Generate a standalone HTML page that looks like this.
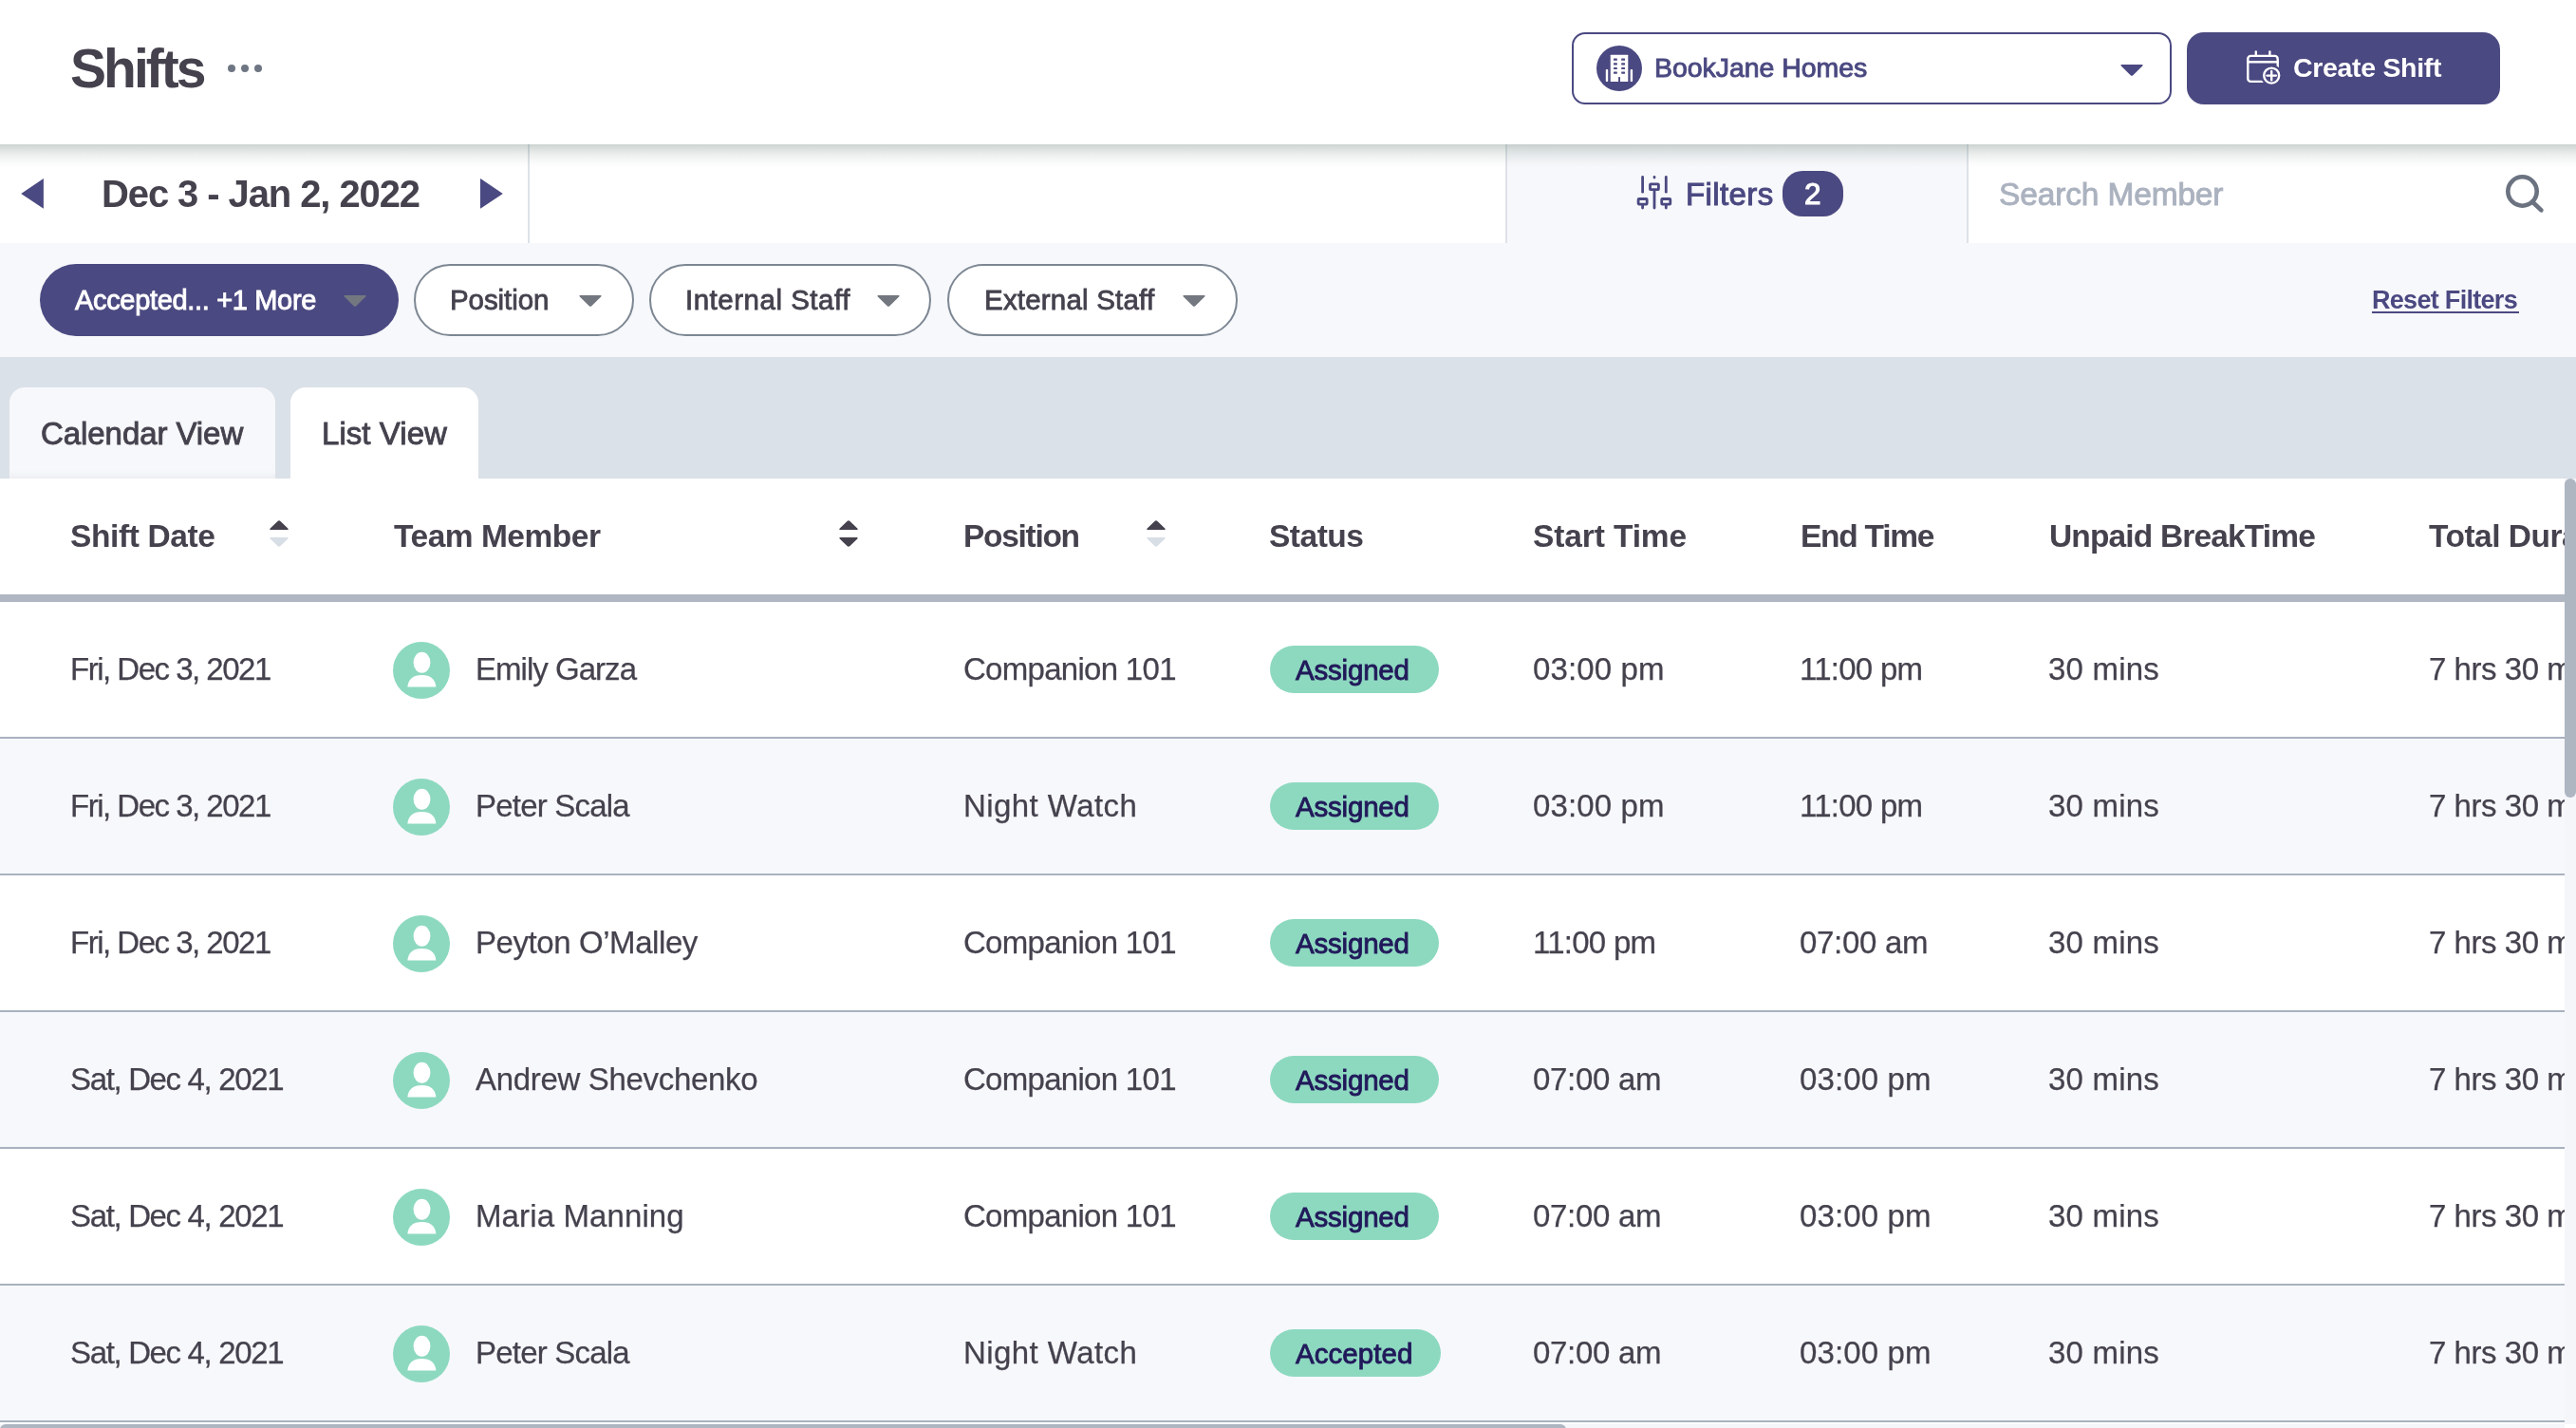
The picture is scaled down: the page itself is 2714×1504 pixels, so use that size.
<!DOCTYPE html>
<html><head><meta charset="utf-8"><title>Shifts</title>
<style>
html,body{margin:0;padding:0;}
body{width:2714px;height:1504px;position:relative;overflow:hidden;background:#fff;font-family:"Liberation Sans",sans-serif;}
.a{position:absolute;}
.t{position:absolute;white-space:nowrap;will-change:transform;}
svg.a{display:block;}
</style></head><body>
<div class="a" style="left:0px;top:0px;width:2714px;height:152px;background:#fff;"></div>
<div class="t " style="left:74.4px;top:43.95px;font-size:57px;line-height:57px;font-weight:700;color:#45424e;letter-spacing:-2.98px;">Shifts</div>
<div class="a" style="left:240px;top:68px;width:8px;height:8px;background:#6f7683;border-radius:50%;"></div>
<div class="a" style="left:254px;top:68px;width:8px;height:8px;background:#6f7683;border-radius:50%;"></div>
<div class="a" style="left:268px;top:68px;width:8px;height:8px;background:#6f7683;border-radius:50%;"></div>
<div class="a" style="left:1656px;top:34px;width:632px;height:76px;box-sizing:border-box;border:2px solid #4b4981;border-radius:14px;background:#fff;"></div>
<div class="a" style="left:1682px;top:48px;width:48px;height:48px;background:#4b4981;border-radius:50%;"></div>
<svg class="a" style="left:1682px;top:48px" width="48" height="48" viewBox="0 0 48 48">
<rect x="14.75" y="9.8" width="18.55" height="28.2" rx="0.5" fill="#fff"/>
<rect x="23.1" y="33.1" width="1.9" height="5" fill="#4b4981"/>
<g fill="#4b4981">
<rect x="18" y="13.5" width="3.85" height="2.3" rx="0.4"/><rect x="26.2" y="13.5" width="3.85" height="2.3" rx="0.4"/>
<rect x="18" y="18.2" width="3.85" height="2.2" rx="0.4"/><rect x="26.2" y="18.2" width="3.85" height="2.2" rx="0.4"/>
<rect x="18" y="22.9" width="3.85" height="2.0" rx="0.4"/><rect x="26.2" y="22.9" width="3.85" height="2.0" rx="0.4"/>
<rect x="18" y="27.5" width="3.85" height="2.2" rx="0.4"/><rect x="26.2" y="27.5" width="3.85" height="2.2" rx="0.4"/>
</g>
<rect x="9.8" y="24.9" width="2.4" height="13.1" rx="0.8" fill="#fff"/>
<rect x="35.7" y="24.9" width="2.4" height="13.1" rx="0.8" fill="#fff"/>
</svg>
<div class="t " style="left:1742.6px;top:57.37px;font-size:28.5px;line-height:28.5px;color:#4b4981;letter-spacing:-0.054px;-webkit-text-stroke:0.9px #4b4981;">BookJane Homes</div>
<svg class="a" style="left:2232px;top:66px" width="28" height="16" viewBox="0 0 28 16"><path d="M3.4 2 H24.6 Q26.6 2 25.2 3.5 L15.3 13.2 Q14 14.4 12.7 13.2 L2.8 3.5 Q1.4 2 3.4 2Z" fill="#4b4981"/></svg>
<div class="a" style="left:2304px;top:34px;width:330px;height:76px;background:#4b4981;border-radius:18px;"></div>
<svg class="a" style="left:2360px;top:48px" width="50" height="46" viewBox="0 0 50 46">
<g fill="none" stroke="#fff" stroke-width="2.4" stroke-linecap="round">
<rect x="8.3" y="10.9" width="31.4" height="27" rx="3"/>
<line x1="8.3" y1="17.2" x2="39.7" y2="17.2"/>
<line x1="16.8" y1="6.4" x2="16.8" y2="10.9"/><line x1="31.4" y1="6.4" x2="31.4" y2="10.9"/>
</g>
<circle cx="33.2" cy="31.6" r="11.3" fill="#4b4981"/>
<g fill="none" stroke="#fff" stroke-width="2.4" stroke-linecap="round">
<circle cx="33.2" cy="31.6" r="8"/>
<line x1="28.5" y1="31.6" x2="37.9" y2="31.6"/><line x1="33.2" y1="26.9" x2="33.2" y2="36.3"/>
</g></svg>
<div class="t " style="left:2416.2px;top:57.47px;font-size:28.5px;line-height:28.5px;font-weight:700;color:#fff;letter-spacing:-0.318px;">Create Shift</div>
<div class="a" style="left:0px;top:152px;width:2714px;height:104px;background:#fff;"></div>
<div class="a" style="left:1588px;top:152px;width:485px;height:104px;background:#f7f8fb;"></div>
<div class="a" style="left:556px;top:152px;width:2px;height:104px;background:#dde2e8;"></div>
<div class="a" style="left:1586px;top:152px;width:2px;height:104px;background:#dde2e8;"></div>
<div class="a" style="left:2072px;top:152px;width:2px;height:104px;background:#dde2e8;"></div>
<svg class="a" style="left:20px;top:186px" width="28" height="36" viewBox="0 0 28 36"><path d="M2.2 18 L25.9 1.9 V33.8Z" fill="#4b4981"/></svg>
<svg class="a" style="left:504px;top:186px" width="28" height="36" viewBox="0 0 28 36"><path d="M25.8 18 L2 1.9 V33.8Z" fill="#4b4981"/></svg>
<div class="t " style="left:106.8px;top:184.44px;font-size:40px;line-height:40px;font-weight:700;color:#45424e;letter-spacing:-1.094px;">Dec 3 - Jan 2, 2022</div>
<svg class="a" style="left:1718px;top:178px" width="50" height="50" viewBox="0 0 50 50">
<g fill="none" stroke="#4b4981" stroke-width="2.8" stroke-linecap="round" stroke-linejoin="round">
<line x1="12.6" y1="8.4" x2="12.6" y2="24.2"/><line x1="37.3" y1="8.4" x2="37.3" y2="24.2"/>
<line x1="25" y1="8.4" x2="25" y2="9.1"/><line x1="25" y1="23.1" x2="25" y2="41"/>
<line x1="12.6" y1="38.5" x2="12.6" y2="41"/><line x1="37.3" y1="38.5" x2="37.3" y2="41"/>
<rect x="20.5" y="15.8" width="8.9" height="5.9" rx="0.8"/>
<rect x="8.1" y="31.5" width="9.1" height="5.6" rx="0.8"/>
<rect x="32.7" y="31.5" width="9.1" height="5.6" rx="0.8"/>
</g></svg>
<div class="t " style="left:1775.7px;top:188.07px;font-size:33px;line-height:33px;color:#4b4981;letter-spacing:0.383px;-webkit-text-stroke:1px #4b4981;">Filters</div>
<div class="a" style="left:1878px;top:180px;width:64px;height:48px;background:#4b4981;border-radius:21px;"></div>
<div class="t " style="left:1900.7px;top:188.94px;font-size:31.5px;line-height:31.5px;color:#fff;letter-spacing:0px;-webkit-text-stroke:1.1px #fff;">2</div>
<div class="t " style="left:2105.7px;top:188.14px;font-size:33.5px;line-height:33.5px;color:#abb2bf;letter-spacing:-0.15px;-webkit-text-stroke:0.9px #abb2bf;">Search Member</div>
<svg class="a" style="left:2630px;top:176px" width="60" height="56" viewBox="0 0 60 56"><circle cx="27.5" cy="25.5" r="15.2" fill="none" stroke="#6b7280" stroke-width="4.6"/><line x1="38" y1="36.5" x2="47.4" y2="45.4" stroke="#6b7280" stroke-width="4.6" stroke-linecap="round"/></svg>
<div class="a" style="left:0px;top:152px;width:2714px;height:24px;background:linear-gradient(rgba(60,90,75,0.26),rgba(60,90,75,0.164) 25%,rgba(60,90,75,0.087) 50%,rgba(60,90,75,0.036) 75%,rgba(60,90,75,0));"></div>
<div class="a" style="left:0px;top:256px;width:2714px;height:120px;background:#f7f8fb;"></div>
<div class="a" style="left:42px;top:278px;width:378px;height:76px;background:#4b4981;border-radius:38px;"></div>
<div class="t " style="left:78.9px;top:302.05px;font-size:29px;line-height:29px;color:#fff;letter-spacing:-0.333px;-webkit-text-stroke:0.9px #fff;">Accepted... +1 More</div>
<svg class="a" style="left:360px;top:309px" width="28" height="16" viewBox="0 0 28 16"><path d="M3.4 2 H24.6 Q26.6 2 25.2 3.5 L15.3 13.2 Q14 14.4 12.7 13.2 L2.8 3.5 Q1.4 2 3.4 2Z" fill="#737880"/></svg>
<div class="a" style="left:436px;top:278px;width:232px;height:76px;box-sizing:border-box;border:2px solid #7d8793;border-radius:38px;background:#fff;"></div>
<div class="t " style="left:474.2px;top:301.23px;font-size:29.5px;line-height:29.5px;color:#45424e;letter-spacing:-0.071px;-webkit-text-stroke:0.8px #45424e;">Position</div>
<svg class="a" style="left:608px;top:309px" width="28" height="16" viewBox="0 0 28 16"><path d="M3.4 2 H24.6 Q26.6 2 25.2 3.5 L15.3 13.2 Q14 14.4 12.7 13.2 L2.8 3.5 Q1.4 2 3.4 2Z" fill="#737880"/></svg>
<div class="a" style="left:684px;top:278px;width:297px;height:76px;box-sizing:border-box;border:2px solid #7d8793;border-radius:38px;background:#fff;"></div>
<div class="t " style="left:721.5px;top:301.23px;font-size:29.5px;line-height:29.5px;color:#45424e;letter-spacing:0.508px;-webkit-text-stroke:0.8px #45424e;">Internal Staff</div>
<svg class="a" style="left:922px;top:309px" width="28" height="16" viewBox="0 0 28 16"><path d="M3.4 2 H24.6 Q26.6 2 25.2 3.5 L15.3 13.2 Q14 14.4 12.7 13.2 L2.8 3.5 Q1.4 2 3.4 2Z" fill="#737880"/></svg>
<div class="a" style="left:998px;top:278px;width:306px;height:76px;box-sizing:border-box;border:2px solid #7d8793;border-radius:38px;background:#fff;"></div>
<div class="t " style="left:1037.2px;top:301.23px;font-size:29.5px;line-height:29.5px;color:#45424e;letter-spacing:0.2px;-webkit-text-stroke:0.8px #45424e;">External Staff</div>
<svg class="a" style="left:1244px;top:309px" width="28" height="16" viewBox="0 0 28 16"><path d="M3.4 2 H24.6 Q26.6 2 25.2 3.5 L15.3 13.2 Q14 14.4 12.7 13.2 L2.8 3.5 Q1.4 2 3.4 2Z" fill="#737880"/></svg>
<div class="t " style="left:2499.1px;top:302.94px;font-size:27px;line-height:27px;font-weight:700;color:#4b4981;letter-spacing:-0.7px;">Reset Filters</div>
<div class="a" style="left:2499px;top:328px;width:155px;height:2px;background:#4b4981;"></div>
<div class="a" style="left:0px;top:376px;width:2714px;height:128px;background:#dbe1e8;"></div>
<div class="a" style="left:10px;top:408px;width:280px;height:96px;background:#f7f8fb;border-radius:16px 16px 0 0;box-shadow:inset 0 -10px 10px -8px rgba(0,0,0,0.06);"></div>
<div class="a" style="left:306px;top:408px;width:198px;height:96px;background:#fff;border-radius:16px 16px 0 0;"></div>
<div class="t " style="left:42.6px;top:440.07px;font-size:33px;line-height:33px;color:#45424e;letter-spacing:-0.067px;-webkit-text-stroke:0.9px #45424e;">Calendar View</div>
<div class="t " style="left:338.8px;top:440.07px;font-size:33px;line-height:33px;color:#45424e;letter-spacing:0.062px;-webkit-text-stroke:0.9px #45424e;">List View</div>
<div class="a" style="left:0px;top:504px;width:2702px;height:996px;background:#fff;"></div>
<div class="t " style="left:74.0px;top:547.64px;font-size:33.5px;line-height:33.5px;font-weight:700;color:#45424e;letter-spacing:-0.378px;">Shift Date</div>
<div class="t " style="left:414.8px;top:547.64px;font-size:33.5px;line-height:33.5px;font-weight:700;color:#45424e;letter-spacing:-0.48px;">Team Member</div>
<div class="t " style="left:1015.1px;top:547.64px;font-size:33.5px;line-height:33.5px;font-weight:700;color:#45424e;letter-spacing:-1.3px;">Position</div>
<div class="t " style="left:1337.2px;top:547.64px;font-size:33.5px;line-height:33.5px;font-weight:700;color:#45424e;letter-spacing:-0.48px;">Status</div>
<div class="t " style="left:1614.7px;top:547.64px;font-size:33.5px;line-height:33.5px;font-weight:700;color:#45424e;letter-spacing:-0.122px;">Start Time</div>
<div class="t " style="left:1896.7px;top:547.64px;font-size:33.5px;line-height:33.5px;font-weight:700;color:#45424e;letter-spacing:-1.243px;">End Time</div>
<div class="t " style="left:2158.6px;top:547.64px;font-size:33.5px;line-height:33.5px;font-weight:700;color:#45424e;letter-spacing:-0.847px;">Unpaid BreakTime</div>
<div class="a" style="left:2540px;top:540px;width:162px;height:60px;overflow:hidden;"><div class="t " style="left:18.8px;top:7.64px;font-size:33.5px;line-height:33.5px;font-weight:700;color:#45424e;letter-spacing:-0.508px;">Total Duration</div>
</div>
<svg class="a" style="left:284px;top:548px" width="20" height="30" viewBox="0 0 20 30"><path d="M10 0.3 Q10.8 0.3 11.5 1 L19.3 8.6 Q20.3 10 18.8 10 H1.2 Q-0.3 10 0.7 8.6 L8.5 1 Q9.2 0.3 10 0.3Z" fill="#45424e"/><path d="M10 27.7 Q10.8 27.7 11.5 27 L19.3 19.4 Q20.3 18 18.8 18 H1.2 Q-0.3 18 0.7 19.4 L8.5 27 Q9.2 27.7 10 27.7Z" fill="#d8dee6"/></svg>
<svg class="a" style="left:884px;top:548px" width="20" height="30" viewBox="0 0 20 30"><path d="M10 0.3 Q10.8 0.3 11.5 1 L19.3 8.6 Q20.3 10 18.8 10 H1.2 Q-0.3 10 0.7 8.6 L8.5 1 Q9.2 0.3 10 0.3Z" fill="#45424e"/><path d="M10 27.7 Q10.8 27.7 11.5 27 L19.3 19.4 Q20.3 18 18.8 18 H1.2 Q-0.3 18 0.7 19.4 L8.5 27 Q9.2 27.7 10 27.7Z" fill="#45424e"/></svg>
<svg class="a" style="left:1208px;top:548px" width="20" height="30" viewBox="0 0 20 30"><path d="M10 0.3 Q10.8 0.3 11.5 1 L19.3 8.6 Q20.3 10 18.8 10 H1.2 Q-0.3 10 0.7 8.6 L8.5 1 Q9.2 0.3 10 0.3Z" fill="#45424e"/><path d="M10 27.7 Q10.8 27.7 11.5 27 L19.3 19.4 Q20.3 18 18.8 18 H1.2 Q-0.3 18 0.7 19.4 L8.5 27 Q9.2 27.7 10 27.7Z" fill="#d8dee6"/></svg>
<div class="a" style="left:0px;top:626px;width:2702px;height:8px;background:#b0b7c3;"></div>
<div class="a" style="left:0px;top:634px;width:2702px;height:142px;background:#fff;"></div>
<div class="a" style="left:0px;top:776px;width:2702px;height:2px;background:#a9b2bf;"></div>
<div class="t " style="left:74.4px;top:688.07px;font-size:33px;line-height:33px;color:#45424e;letter-spacing:-1.5px;-webkit-text-stroke:0.25px #45424e;">Fri, Dec 3, 2021</div>
<svg class="a" style="left:414px;top:676px" width="60" height="60" viewBox="0 0 60 60"><circle cx="30" cy="30" r="30" fill="#8dd9c0"/><ellipse cx="30.5" cy="21.7" rx="8.9" ry="11" fill="#fff"/><path d="M15.4 47.4 Q16.5 34.9 30.4 34.9 Q44.3 34.9 45.3 47.4Z" fill="#fff"/></svg>
<div class="t " style="left:501.2px;top:688.07px;font-size:33px;line-height:33px;color:#45424e;letter-spacing:-0.97px;-webkit-text-stroke:0.25px #45424e;">Emily Garza</div>
<div class="t " style="left:1015.0px;top:688.07px;font-size:33px;line-height:33px;color:#45424e;letter-spacing:-0.708px;-webkit-text-stroke:0.25px #45424e;">Companion 101</div>
<div class="a" style="left:1338px;top:680px;width:178px;height:50px;background:#8dd9c0;border-radius:25px;"></div>
<div class="t " style="left:1364.9px;top:691.13px;font-size:29.5px;line-height:29.5px;color:#21195a;letter-spacing:-0.2px;-webkit-text-stroke:0.9px #21195a;">Assigned</div>
<div class="t " style="left:1615.0px;top:688.07px;font-size:33px;line-height:33px;color:#45424e;letter-spacing:0.143px;-webkit-text-stroke:0.25px #45424e;">03:00 pm</div>
<div class="t " style="left:1896.2px;top:688.07px;font-size:33px;line-height:33px;color:#45424e;letter-spacing:-0.729px;-webkit-text-stroke:0.25px #45424e;">11:00 pm</div>
<div class="t " style="left:2157.9px;top:688.07px;font-size:33px;line-height:33px;color:#45424e;letter-spacing:0.2px;-webkit-text-stroke:0.25px #45424e;">30 mins</div>
<div class="a" style="left:2540px;top:664px;width:162px;height:60px;overflow:hidden;"><div class="t " style="left:19.2px;top:24.07px;font-size:33px;line-height:33px;color:#45424e;letter-spacing:-0.45px;-webkit-text-stroke:0.25px #45424e;">7 hrs 30 mins</div>
</div>
<div class="a" style="left:0px;top:778px;width:2702px;height:142px;background:#f7f8fb;"></div>
<div class="a" style="left:0px;top:920px;width:2702px;height:2px;background:#a9b2bf;"></div>
<div class="t " style="left:74.4px;top:832.07px;font-size:33px;line-height:33px;color:#45424e;letter-spacing:-1.5px;-webkit-text-stroke:0.25px #45424e;">Fri, Dec 3, 2021</div>
<svg class="a" style="left:414px;top:820px" width="60" height="60" viewBox="0 0 60 60"><circle cx="30" cy="30" r="30" fill="#8dd9c0"/><ellipse cx="30.5" cy="21.7" rx="8.9" ry="11" fill="#fff"/><path d="M15.4 47.4 Q16.5 34.9 30.4 34.9 Q44.3 34.9 45.3 47.4Z" fill="#fff"/></svg>
<div class="t " style="left:501.2px;top:832.07px;font-size:33px;line-height:33px;color:#45424e;letter-spacing:-0.79px;-webkit-text-stroke:0.25px #45424e;">Peter Scala</div>
<div class="t " style="left:1015.0px;top:832.07px;font-size:33px;line-height:33px;color:#45424e;letter-spacing:0.43px;-webkit-text-stroke:0.25px #45424e;">Night Watch</div>
<div class="a" style="left:1338px;top:824px;width:178px;height:50px;background:#8dd9c0;border-radius:25px;"></div>
<div class="t " style="left:1364.9px;top:835.13px;font-size:29.5px;line-height:29.5px;color:#21195a;letter-spacing:-0.2px;-webkit-text-stroke:0.9px #21195a;">Assigned</div>
<div class="t " style="left:1615.0px;top:832.07px;font-size:33px;line-height:33px;color:#45424e;letter-spacing:0.143px;-webkit-text-stroke:0.25px #45424e;">03:00 pm</div>
<div class="t " style="left:1896.2px;top:832.07px;font-size:33px;line-height:33px;color:#45424e;letter-spacing:-0.729px;-webkit-text-stroke:0.25px #45424e;">11:00 pm</div>
<div class="t " style="left:2157.9px;top:832.07px;font-size:33px;line-height:33px;color:#45424e;letter-spacing:0.2px;-webkit-text-stroke:0.25px #45424e;">30 mins</div>
<div class="a" style="left:2540px;top:808px;width:162px;height:60px;overflow:hidden;"><div class="t " style="left:19.2px;top:24.07px;font-size:33px;line-height:33px;color:#45424e;letter-spacing:-0.45px;-webkit-text-stroke:0.25px #45424e;">7 hrs 30 mins</div>
</div>
<div class="a" style="left:0px;top:922px;width:2702px;height:142px;background:#fff;"></div>
<div class="a" style="left:0px;top:1064px;width:2702px;height:2px;background:#a9b2bf;"></div>
<div class="t " style="left:74.4px;top:976.07px;font-size:33px;line-height:33px;color:#45424e;letter-spacing:-1.5px;-webkit-text-stroke:0.25px #45424e;">Fri, Dec 3, 2021</div>
<svg class="a" style="left:414px;top:964px" width="60" height="60" viewBox="0 0 60 60"><circle cx="30" cy="30" r="30" fill="#8dd9c0"/><ellipse cx="30.5" cy="21.7" rx="8.9" ry="11" fill="#fff"/><path d="M15.4 47.4 Q16.5 34.9 30.4 34.9 Q44.3 34.9 45.3 47.4Z" fill="#fff"/></svg>
<div class="t " style="left:501.2px;top:976.07px;font-size:33px;line-height:33px;color:#45424e;letter-spacing:-0.421px;-webkit-text-stroke:0.25px #45424e;">Peyton O’Malley</div>
<div class="t " style="left:1015.0px;top:976.07px;font-size:33px;line-height:33px;color:#45424e;letter-spacing:-0.708px;-webkit-text-stroke:0.25px #45424e;">Companion 101</div>
<div class="a" style="left:1338px;top:968px;width:178px;height:50px;background:#8dd9c0;border-radius:25px;"></div>
<div class="t " style="left:1364.9px;top:979.13px;font-size:29.5px;line-height:29.5px;color:#21195a;letter-spacing:-0.2px;-webkit-text-stroke:0.9px #21195a;">Assigned</div>
<div class="t " style="left:1615.0px;top:976.07px;font-size:33px;line-height:33px;color:#45424e;letter-spacing:-0.729px;-webkit-text-stroke:0.25px #45424e;">11:00 pm</div>
<div class="t " style="left:1896.2px;top:976.07px;font-size:33px;line-height:33px;color:#45424e;letter-spacing:-0.3px;-webkit-text-stroke:0.25px #45424e;">07:00 am</div>
<div class="t " style="left:2157.9px;top:976.07px;font-size:33px;line-height:33px;color:#45424e;letter-spacing:0.2px;-webkit-text-stroke:0.25px #45424e;">30 mins</div>
<div class="a" style="left:2540px;top:952px;width:162px;height:60px;overflow:hidden;"><div class="t " style="left:19.2px;top:24.07px;font-size:33px;line-height:33px;color:#45424e;letter-spacing:-0.45px;-webkit-text-stroke:0.25px #45424e;">7 hrs 30 mins</div>
</div>
<div class="a" style="left:0px;top:1066px;width:2702px;height:142px;background:#f7f8fb;"></div>
<div class="a" style="left:0px;top:1208px;width:2702px;height:2px;background:#a9b2bf;"></div>
<div class="t " style="left:74.4px;top:1120.07px;font-size:33px;line-height:33px;color:#45424e;letter-spacing:-1.347px;-webkit-text-stroke:0.25px #45424e;">Sat, Dec 4, 2021</div>
<svg class="a" style="left:414px;top:1108px" width="60" height="60" viewBox="0 0 60 60"><circle cx="30" cy="30" r="30" fill="#8dd9c0"/><ellipse cx="30.5" cy="21.7" rx="8.9" ry="11" fill="#fff"/><path d="M15.4 47.4 Q16.5 34.9 30.4 34.9 Q44.3 34.9 45.3 47.4Z" fill="#fff"/></svg>
<div class="t " style="left:501.2px;top:1120.07px;font-size:33px;line-height:33px;color:#45424e;letter-spacing:-0.319px;-webkit-text-stroke:0.25px #45424e;">Andrew Shevchenko</div>
<div class="t " style="left:1015.0px;top:1120.07px;font-size:33px;line-height:33px;color:#45424e;letter-spacing:-0.708px;-webkit-text-stroke:0.25px #45424e;">Companion 101</div>
<div class="a" style="left:1338px;top:1112px;width:178px;height:50px;background:#8dd9c0;border-radius:25px;"></div>
<div class="t " style="left:1364.9px;top:1123.13px;font-size:29.5px;line-height:29.5px;color:#21195a;letter-spacing:-0.2px;-webkit-text-stroke:0.9px #21195a;">Assigned</div>
<div class="t " style="left:1615.0px;top:1120.07px;font-size:33px;line-height:33px;color:#45424e;letter-spacing:-0.3px;-webkit-text-stroke:0.25px #45424e;">07:00 am</div>
<div class="t " style="left:1896.2px;top:1120.07px;font-size:33px;line-height:33px;color:#45424e;letter-spacing:0.143px;-webkit-text-stroke:0.25px #45424e;">03:00 pm</div>
<div class="t " style="left:2157.9px;top:1120.07px;font-size:33px;line-height:33px;color:#45424e;letter-spacing:0.2px;-webkit-text-stroke:0.25px #45424e;">30 mins</div>
<div class="a" style="left:2540px;top:1096px;width:162px;height:60px;overflow:hidden;"><div class="t " style="left:19.2px;top:24.07px;font-size:33px;line-height:33px;color:#45424e;letter-spacing:-0.45px;-webkit-text-stroke:0.25px #45424e;">7 hrs 30 mins</div>
</div>
<div class="a" style="left:0px;top:1210px;width:2702px;height:142px;background:#fff;"></div>
<div class="a" style="left:0px;top:1352px;width:2702px;height:2px;background:#a9b2bf;"></div>
<div class="t " style="left:74.4px;top:1264.07px;font-size:33px;line-height:33px;color:#45424e;letter-spacing:-1.347px;-webkit-text-stroke:0.25px #45424e;">Sat, Dec 4, 2021</div>
<svg class="a" style="left:414px;top:1252px" width="60" height="60" viewBox="0 0 60 60"><circle cx="30" cy="30" r="30" fill="#8dd9c0"/><ellipse cx="30.5" cy="21.7" rx="8.9" ry="11" fill="#fff"/><path d="M15.4 47.4 Q16.5 34.9 30.4 34.9 Q44.3 34.9 45.3 47.4Z" fill="#fff"/></svg>
<div class="t " style="left:501.2px;top:1264.07px;font-size:33px;line-height:33px;color:#45424e;letter-spacing:0.117px;-webkit-text-stroke:0.25px #45424e;">Maria Manning</div>
<div class="t " style="left:1015.0px;top:1264.07px;font-size:33px;line-height:33px;color:#45424e;letter-spacing:-0.708px;-webkit-text-stroke:0.25px #45424e;">Companion 101</div>
<div class="a" style="left:1338px;top:1256px;width:178px;height:50px;background:#8dd9c0;border-radius:25px;"></div>
<div class="t " style="left:1364.9px;top:1267.13px;font-size:29.5px;line-height:29.5px;color:#21195a;letter-spacing:-0.2px;-webkit-text-stroke:0.9px #21195a;">Assigned</div>
<div class="t " style="left:1615.0px;top:1264.07px;font-size:33px;line-height:33px;color:#45424e;letter-spacing:-0.3px;-webkit-text-stroke:0.25px #45424e;">07:00 am</div>
<div class="t " style="left:1896.2px;top:1264.07px;font-size:33px;line-height:33px;color:#45424e;letter-spacing:0.143px;-webkit-text-stroke:0.25px #45424e;">03:00 pm</div>
<div class="t " style="left:2157.9px;top:1264.07px;font-size:33px;line-height:33px;color:#45424e;letter-spacing:0.2px;-webkit-text-stroke:0.25px #45424e;">30 mins</div>
<div class="a" style="left:2540px;top:1240px;width:162px;height:60px;overflow:hidden;"><div class="t " style="left:19.2px;top:24.07px;font-size:33px;line-height:33px;color:#45424e;letter-spacing:-0.45px;-webkit-text-stroke:0.25px #45424e;">7 hrs 30 mins</div>
</div>
<div class="a" style="left:0px;top:1354px;width:2702px;height:142px;background:#f7f8fb;"></div>
<div class="a" style="left:0px;top:1496px;width:2702px;height:2px;background:#a9b2bf;"></div>
<div class="t " style="left:74.4px;top:1408.07px;font-size:33px;line-height:33px;color:#45424e;letter-spacing:-1.347px;-webkit-text-stroke:0.25px #45424e;">Sat, Dec 4, 2021</div>
<svg class="a" style="left:414px;top:1396px" width="60" height="60" viewBox="0 0 60 60"><circle cx="30" cy="30" r="30" fill="#8dd9c0"/><ellipse cx="30.5" cy="21.7" rx="8.9" ry="11" fill="#fff"/><path d="M15.4 47.4 Q16.5 34.9 30.4 34.9 Q44.3 34.9 45.3 47.4Z" fill="#fff"/></svg>
<div class="t " style="left:501.2px;top:1408.07px;font-size:33px;line-height:33px;color:#45424e;letter-spacing:-0.79px;-webkit-text-stroke:0.25px #45424e;">Peter Scala</div>
<div class="t " style="left:1015.0px;top:1408.07px;font-size:33px;line-height:33px;color:#45424e;letter-spacing:0.43px;-webkit-text-stroke:0.25px #45424e;">Night Watch</div>
<div class="a" style="left:1338px;top:1400px;width:180px;height:50px;background:#8dd9c0;border-radius:25px;"></div>
<div class="t " style="left:1364.9px;top:1411.13px;font-size:29.5px;line-height:29.5px;color:#21195a;letter-spacing:0.043px;-webkit-text-stroke:0.9px #21195a;">Accepted</div>
<div class="t " style="left:1615.0px;top:1408.07px;font-size:33px;line-height:33px;color:#45424e;letter-spacing:-0.3px;-webkit-text-stroke:0.25px #45424e;">07:00 am</div>
<div class="t " style="left:1896.2px;top:1408.07px;font-size:33px;line-height:33px;color:#45424e;letter-spacing:0.143px;-webkit-text-stroke:0.25px #45424e;">03:00 pm</div>
<div class="t " style="left:2157.9px;top:1408.07px;font-size:33px;line-height:33px;color:#45424e;letter-spacing:0.2px;-webkit-text-stroke:0.25px #45424e;">30 mins</div>
<div class="a" style="left:2540px;top:1384px;width:162px;height:60px;overflow:hidden;"><div class="t " style="left:19.2px;top:24.07px;font-size:33px;line-height:33px;color:#45424e;letter-spacing:-0.45px;-webkit-text-stroke:0.25px #45424e;">7 hrs 30 mins</div>
</div>
<div class="a" style="left:0px;top:1498px;width:2702px;height:2px;background:#fff;"></div>
<div class="a" style="left:0px;top:1500px;width:2702px;height:4px;background:#f5f6f9;"></div>
<div class="a" style="left:0px;top:1500px;width:1650px;height:12px;background:#aeb6c2;border-radius:6px;"></div>
<div class="a" style="left:2702px;top:504px;width:12px;height:996px;background:#f5f6fa;"></div>
<div class="a" style="left:2702px;top:504px;width:12px;height:336px;background:#aeb6c2;border-radius:6px;"></div>
</body></html>
